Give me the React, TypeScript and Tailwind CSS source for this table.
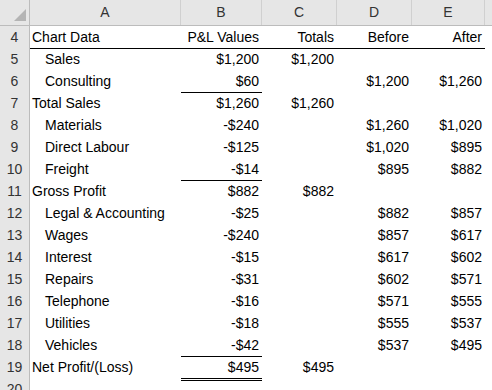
import React from "react";

type Row = {
  n: number;
  a: string;
  indent?: boolean;
  b?: string;
  c?: string;
  d?: string;
  e?: string;
  bBorder?: "single" | "double";
  allBorder?: boolean;
};

const rows: Row[] = [
  { n: 4, a: "Chart Data", b: "P&L Values", c: "Totals", d: "Before", e: "After", allBorder: true },
  { n: 5, a: "Sales", indent: true, b: "$1,200", c: "$1,200" },
  { n: 6, a: "Consulting", indent: true, b: "$60", d: "$1,200", e: "$1,260", bBorder: "single" },
  { n: 7, a: "Total Sales", b: "$1,260", c: "$1,260" },
  { n: 8, a: "Materials", indent: true, b: "-$240", d: "$1,260", e: "$1,020" },
  { n: 9, a: "Direct Labour", indent: true, b: "-$125", d: "$1,020", e: "$895" },
  { n: 10, a: "Freight", indent: true, b: "-$14", d: "$895", e: "$882", bBorder: "single" },
  { n: 11, a: "Gross Profit", b: "$882", c: "$882" },
  { n: 12, a: "Legal & Accounting", indent: true, b: "-$25", d: "$882", e: "$857" },
  { n: 13, a: "Wages", indent: true, b: "-$240", d: "$857", e: "$617" },
  { n: 14, a: "Interest", indent: true, b: "-$15", d: "$617", e: "$602" },
  { n: 15, a: "Repairs", indent: true, b: "-$31", d: "$602", e: "$571" },
  { n: 16, a: "Telephone", indent: true, b: "-$16", d: "$571", e: "$555" },
  { n: 17, a: "Utilities", indent: true, b: "-$18", d: "$555", e: "$537" },
  { n: 18, a: "Vehicles", indent: true, b: "-$42", d: "$537", e: "$495", bBorder: "single" },
  { n: 19, a: "Net Profit/(Loss)", b: "$495", c: "$495", bBorder: "double" },
];

const gridCols = "grid grid-cols-[30px_151px_81px_75px_75px_73px_1fr]";

export default function App() {
  return (
    <div
      className="w-[492px] h-[390px] overflow-hidden bg-white text-[14px] text-black"
      style={{ fontFamily: '"Liberation Sans", Arial, sans-serif' }}
    >
      {/* column header */}
      <div className={`${gridCols} h-[26px] bg-[#e6e6e6] border-b border-[#bcbcbc] text-[#333]`}>
        <div className="relative border-r border-[#bcbcbc]">
          <svg className="absolute right-[3px] bottom-[4px]" width="12" height="12" viewBox="0 0 12 12">
            <polygon points="12,0 12,12 0,12" fill="#b4b4b4" />
          </svg>
        </div>
        {["A", "B", "C", "D", "E", ""].map((l, i) => (
          <div key={i} className={`flex items-center justify-center ${i < 5 ? "border-r border-[#d0d0d0]" : ""}`}>
            {l}
          </div>
        ))}
      </div>
      {rows.map((r) => (
        <div key={r.n} className={`${gridCols} h-[22px] leading-[22px]`}>
          <div className="bg-[#e6e6e6] border-r border-b border-r-[#bcbcbc] border-b-[#d8d8d8] text-center text-[#333]">
            {r.n}
          </div>
          <div className={`pl-[2px] whitespace-nowrap ${r.allBorder ? "border-b border-black" : ""}`}>
            <span className={r.indent ? "pl-[13px]" : ""}>{r.a}</span>
          </div>
          <div
            className={`text-right pr-[3px] whitespace-nowrap ${
              r.allBorder
                ? "border-b border-black"
                : r.bBorder === "single"
                ? "border-b border-black"
                : r.bBorder === "double"
                ? "border-b-[3px] border-double border-black"
                : ""
            }`}
          >
            {r.b}
          </div>
          <div className={`text-right pr-[3px] whitespace-nowrap ${r.allBorder ? "border-b border-black" : ""}`}>{r.c}</div>
          <div className={`text-right pr-[3px] whitespace-nowrap ${r.allBorder ? "border-b border-black" : ""}`}>{r.d}</div>
          <div className={`text-right pr-[3px] whitespace-nowrap ${r.allBorder ? "border-b border-black" : ""}`}>{r.e}</div>
          <div />
        </div>
      ))}
      <div className={`${gridCols} h-[22px] leading-[22px]`}>
        <div className="bg-[#e6e6e6] border-r border-[#bcbcbc] text-center text-[#333]">20</div>
      </div>
    </div>
  );
}
